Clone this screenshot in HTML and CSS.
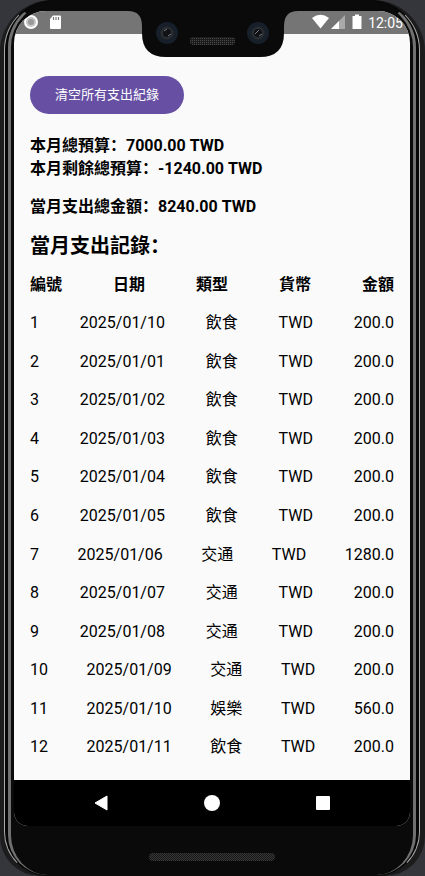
FILE: index.html
```html
<!DOCTYPE html>
<html lang="zh-Hans">
<head>
<meta charset="utf-8">
<meta name="viewport" content="width=device-width, initial-scale=1">
<title>支出記錄</title>
<link rel="stylesheet" href="styles.css">
</head>
<body>
<div class="device">
<div class="rim">
<div class="bezel">
  <div class="screen">
    <header class="status">
      <svg class="status-left" width="48" height="20" viewBox="0 0 48 20" aria-hidden="true">
        <circle cx="10" cy="10" r="7" fill="#fff"/>
        <circle cx="10" cy="10" r="5" fill="#c4c4c4"/>
        <circle cx="10" cy="10" r="3" fill="#999"/>
        <path d="M32 3.500h7q1 0 1 1v11.500q0 1-1 1h-9q-1 0-1-1V7z" fill="#fff"/>
        <path d="M32.500 5v3M35 5v3M37.500 5v3" stroke="#757575" stroke-width="1.200"/>
      </svg>
      <div class="status-right">
        <svg width="52" height="20" viewBox="0 0 52 20" aria-hidden="true">
          <path d="M0 6Q8.500-.500 17 6L8.500 16.500z" fill="#fff"/>
          <path d="M19 17L33 3v14z" fill="#aaa"/>
          <path d="M19 17l8-8v8z" fill="#fff"/>
          <path d="M43 2.500h4V4h2.500v13h-9V4H43z" fill="#fff"/>
        </svg>
        <time>12:05</time>
      </div>
    </header>
    <main class="content">
      <button class="clear" type="button">清空所有支出紀錄</button>
      <section class="summary">
        <p>本月總預算：7000.00 TWD</p>
        <p>本月剩餘總預算：-1240.00 TWD</p>
      </section>
      <p class="spent">當月支出總金額：8240.00 TWD</p>
      <h1>當月支出記錄：</h1>
      <table class="records">
        <thead><tr><th>編號</th><th>日期</th><th>類型</th><th>貨幣</th><th>金額</th></tr></thead>
        <tbody>
          <tr><td>1</td><td>2025/01/10</td><td>飲食</td><td>TWD</td><td>200.0</td></tr>
          <tr><td>2</td><td>2025/01/01</td><td>飲食</td><td>TWD</td><td>200.0</td></tr>
          <tr><td>3</td><td>2025/01/02</td><td>飲食</td><td>TWD</td><td>200.0</td></tr>
          <tr><td>4</td><td>2025/01/03</td><td>飲食</td><td>TWD</td><td>200.0</td></tr>
          <tr><td>5</td><td>2025/01/04</td><td>飲食</td><td>TWD</td><td>200.0</td></tr>
          <tr><td>6</td><td>2025/01/05</td><td>飲食</td><td>TWD</td><td>200.0</td></tr>
          <tr><td>7</td><td>2025/01/06</td><td>交通</td><td>TWD</td><td>1280.0</td></tr>
          <tr><td>8</td><td>2025/01/07</td><td>交通</td><td>TWD</td><td>200.0</td></tr>
          <tr><td>9</td><td>2025/01/08</td><td>交通</td><td>TWD</td><td>200.0</td></tr>
          <tr><td>10</td><td>2025/01/09</td><td>交通</td><td>TWD</td><td>200.0</td></tr>
          <tr><td>11</td><td>2025/01/10</td><td>娛樂</td><td>TWD</td><td>560.0</td></tr>
          <tr><td>12</td><td>2025/01/11</td><td>飲食</td><td>TWD</td><td>200.0</td></tr>
        </tbody>
      </table>
    </main>
    <nav class="navbar">
      <button type="button" aria-label="返回"><svg width="16" height="18" viewBox="0 0 16 18"><path d="M14 2v14L2 9z" fill="#fff" stroke="#fff" stroke-width="1" stroke-linejoin="round"/></svg></button>
      <button type="button" aria-label="主畫面"><svg width="16" height="16" viewBox="0 0 16 16"><circle cx="8" cy="8" r="8" fill="#fff"/></svg></button>
      <button type="button" aria-label="最近"><svg width="16" height="16" viewBox="0 0 16 16"><rect x="1" y="1" width="14" height="14" rx="1" fill="#fff"/></svg></button>
    </nav>
  </div>
  <div class="chin"><span class="grille"></span></div>
</div>
</div>
<svg class="notch" width="170" height="58" viewBox="0 0 170 58" aria-hidden="true">
  <defs><pattern id="mesh" width="2" height="2" patternUnits="userSpaceOnUse"><rect width="2" height="2" fill="#1c1c1c"/><rect width="1" height="1" fill="#484848"/></pattern></defs>
  <path d="M0 8V11Q14 11 14 26V33Q14 57 38 57H132Q156 57 156 33V26Q156 11 170 11V8z" fill="#0a0a0a"/>
  <circle cx="39" cy="33" r="11" fill="#17202a"/><circle cx="39" cy="33" r="7" fill="#222529"/><circle cx="39" cy="33" r="5" fill="#101216" stroke="#3a3d42"/><path d="M36 31l3-2M40 36l3-2" stroke="#777b88"/>
  <circle cx="130" cy="33" r="11" fill="#17202a"/><circle cx="130" cy="33" r="7" fill="#222529"/><circle cx="130" cy="33" r="5" fill="#101216" stroke="#3a3d42"/><path d="M127 34l4-4M131 36l3-2" stroke="#777b88"/>
  <rect x="62" y="37" width="45" height="8" rx="3" fill="url(#mesh)"/>
</svg>
</div>
</body>
</html>
```
FILE: styles.css
```css
* { box-sizing: border-box; }
body { margin: 0; background: #34363b; color: #000; font: 16px/23px Roboto, "Noto Sans CJK SC", sans-serif; }
p, h1 { margin: 0; }
button { border: 0; padding: 0; font: inherit; }
.device { position: relative; display: flex; min-height: 100vh; padding: 0 5px 0 4px; border-radius: 52px 52px 40px 40px; background: #1c1c1d; }
.rim { flex: 1; display: flex; padding: 0 3px; border: 1px solid #aaa; border-top-color: #0a0a0a; border-bottom-color: #0a0a0a; border-radius: 50px 50px 44px 44px; background: #050505; }
.bezel { flex: 1; display: flex; flex-direction: column; padding: 8px 3px 0; border: 3px solid #707070; border-width: 2px 3px 0; border-top-color: #0a0a0a; border-radius: 46px 46px 40px 40px; background: #0a0a0a; }
.screen { flex: 1; display: flex; flex-direction: column; overflow: hidden; border-radius: 32px 32px 14px 14px; background: #fafafa; }
.status { display: flex; justify-content: space-between; height: 23px; padding: 1px 7px; background: #757575; color: #fff; font-size: 14px; line-height: 22px; }
.status-right { display: flex; gap: 4px; }
.content { flex: 1; display: flex; flex-direction: column; align-items: flex-start; padding: 42px 16px 14px; }
.clear { padding: 0 25px; border-radius: 20px; background: #6750a4; color: #fff; font-size: 13px; line-height: 38px; }
.summary { margin-top: 20px; font-weight: 700; }
.spent { margin-top: 15px; font-weight: 700; }
h1 { margin-top: 14px; font-size: 20px; line-height: 28px; font-weight: 700; }
.records { flex: 1; align-self: stretch; display: flex; flex-direction: column; margin-top: 5px; }
thead { flex: 1; display: flex; flex-direction: column; }
tbody { flex: 12; display: flex; flex-direction: column; }
tr { flex: 1; display: flex; align-items: center; justify-content: space-between; }
th, td { padding: 0; white-space: nowrap; }
.navbar { display: flex; justify-content: center; gap: 95px; height: 46px; background: #000; }
.navbar button { display: grid; place-items: center; background: transparent; }
.chin { display: flex; justify-content: center; align-items: center; height: 49px; padding-top: 12px; }
.grille { width: 126px; height: 8px; border-radius: 4px; background: repeating-conic-gradient(#3a3a3a 0 25%, #141414 0 50%) 0 0 / 2px 2px; }
.notch { position: absolute; top: 0; left: 50%; transform: translateX(-50%); }
```
